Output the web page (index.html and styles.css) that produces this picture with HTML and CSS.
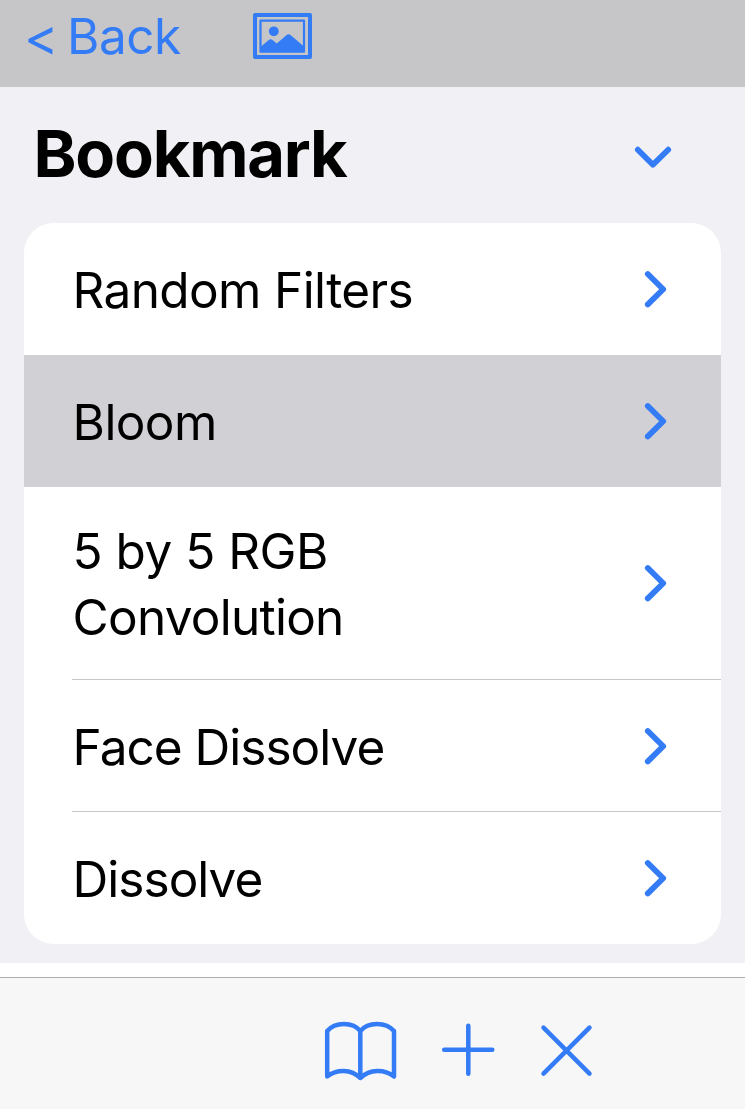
FILE: index.html
```html
<!DOCTYPE html>
<html lang="en">
<head>
<meta charset="utf-8">
<title>Bookmark</title>
<link rel="stylesheet" href="styles.css">
</head>
<body>
<header class="topbar">
  <a class="back"><span class="lt">&lt;</span> <span class="back-label">Back</span></a>
  <svg class="photo" width="60" height="48" viewBox="0 0 60 48"><path d="M3 3H58V45H3Z" fill="none" stroke="#347bf6" stroke-width="4"/><path d="M8.500 8.700H52V39.700H8.500Z" fill="none" stroke="#347bf6" stroke-width="2.200"/><circle cx="21.800" cy="19.300" r="4.900" fill="#347bf6"/><path d="M9 40V34.500L16.800 28Q18.700 26.500 20.500 28L24.800 31.500L34.300 23.200Q36.500 21.300 38.800 23.200L52 34.500V40Z" fill="#347bf6"/></svg>
</header>
<main class="content">
  <div class="heading">
    <h1 class="title">Bookmark</h1>
    <svg class="down" width="38" height="24" viewBox="0 0 38 24"><path d="M3.800 4.700L18.900 19.700L34.200 4.700"/></svg>
  </div>
  <ul class="list">
    <li class="row"><span class="label l1">Random Filters</span><svg class="chev" width="24" height="38" viewBox="0 0 24 38"><path d="M3.800 4L19.200 19.200L3.800 34.400"/></svg></li>
    <li class="row selected"><span class="label l2">Bloom</span><svg class="chev" width="24" height="38" viewBox="0 0 24 38"><path d="M3.800 4L19.200 19.200L3.800 34.400"/></svg></li>
    <li class="row tall"><span class="label"><span class="l3">5 by 5 RGB</span><br><span class="l4">Convolution</span></span><svg class="chev" width="24" height="38" viewBox="0 0 24 38"><path d="M3.800 4L19.200 19.200L3.800 34.400"/></svg></li>
    <li class="row ruled"><span class="label l5">Face Dissolve</span><svg class="chev" width="24" height="38" viewBox="0 0 24 38"><path d="M3.800 4L19.200 19.200L3.800 34.400"/></svg></li>
    <li class="row ruled"><span class="label l5">Dissolve</span><svg class="chev" width="24" height="38" viewBox="0 0 24 38"><path d="M3.800 4L19.200 19.200L3.800 34.400"/></svg></li>
  </ul>
</main>
<footer class="toolbar">
  <svg class="book" width="74" height="62" viewBox="0 0 74 62"><path d="M37.300 10C30 .5 12 .5 4.200 10V55.500C14 48 28 48 37.300 57C47 48 61 48 71 55.500V10C63 .5 45 .5 37.300 10V57"/></svg>
  <svg class="plus" width="54" height="54" viewBox="0 0 54 54"><path d="M27.300 2.700V50.700M3.200 26.700H51.300"/></svg>
  <svg class="cross" width="54" height="54" viewBox="0 0 54 54"><path d="M4.500 3.600L50.500 49.600M50.500 3.600L4.500 49.600"/></svg>
</footer>
</body>
</html>
```
FILE: styles.css
```css
* { box-sizing: border-box; }
body { margin: 0; width: 745px; height: 1109px; overflow: hidden; display: flex; flex-direction: column; background: #fff; font-family: Inter, "Liberation Sans", sans-serif; color: #000; }
.topbar { height: 87px; flex: none; background: #c6c6c8; display: flex; align-items: flex-start; padding: 12px 0 0 24px; }
.back { width: 228px; height: 50px; display: flex; font-size: 49.5px; line-height: 49px; color: #347bf6; }
.lt { font-size: 52px; width: 43px; flex: none; }
.back-label { letter-spacing: -0.5px; }
.content { height: 876px; flex: none; background: #f1f0f5; padding: 0 24px; }
.heading { height: 136px; display: flex; justify-content: space-between; align-items: center; padding: 4px 49px 0 9.5px; }
.title { margin: 0 0 7px; font-size: 65px; line-height: 70px; font-weight: 700; letter-spacing: -1.2px; }
.list { list-style: none; margin: 0; padding: 0; background: #fff; border-radius: 30px; overflow: hidden; height: 721px; }
.row { height: 132px; margin: 0; padding: 0 53px 0 48.6px; display: flex; align-items: center; justify-content: space-between; position: relative; }
.selected { background: #d1d0d5; }
.tall { height: 192px; }
.ruled { padding-top: 2px; }
.ruled::before { content: ""; position: absolute; left: 48px; right: 0; top: 0; height: 1px; background: #c6c6c8; }
.label { font-size: 49.5px; line-height: 66px; padding-top: 2px; white-space: nowrap; }
.l1 { letter-spacing: -0.63px; }
.l2 { letter-spacing: -0.6px; }
.l3 { letter-spacing: -0.5px; }
.l4 { letter-spacing: -0.75px; }
.l5 { letter-spacing: -0.98px; }
svg path { stroke-linecap: round; stroke-linejoin: round; }
.down path, .chev path { fill: none; stroke: #347bf6; stroke-width: 5.800; }
.toolbar { margin-top: 14px; height: 132px; flex: none; border-top: 1px solid #adadad; background: #f7f7f7; display: flex; align-items: flex-start; padding: 43px 0 0 323px; }
.toolbar path { fill: none; stroke: #347bf6; stroke-width: 4.500; }
.plus { margin: 2px 0 0 44px; }
.cross { margin: 3px 0 0 44px; }
```
